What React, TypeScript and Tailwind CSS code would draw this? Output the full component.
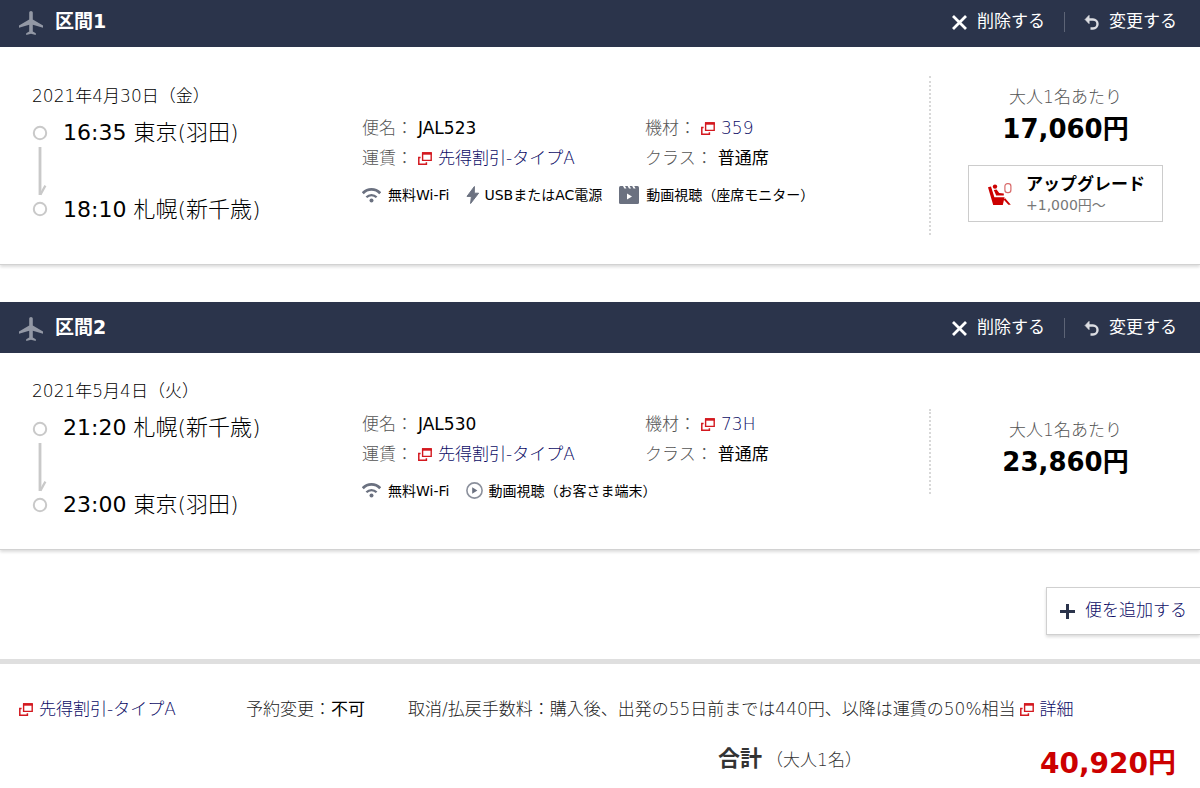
import type { ReactNode } from 'react'

interface Feature {
  icon: 'wifi' | 'power' | 'monitor' | 'play'
  label: string
}

interface Stop {
  time: string
  place: string
}

interface Segment {
  title: string
  date: string
  stops: Stop[]
  flight: string
  fare: string
  aircraft: string
  seatClass: string
  features: Feature[]
  price: string
  upgrade?: string
}

const SEGMENTS: Segment[] = [
  {
    title: '区間1',
    date: '2021年4月30日（金）',
    stops: [
      { time: '16:35', place: '東京(羽田)' },
      { time: '18:10', place: '札幌(新千歳)' },
    ],
    flight: 'JAL523',
    fare: '先得割引-タイプA',
    aircraft: '359',
    seatClass: '普通席',
    features: [
      { icon: 'wifi', label: '無料Wi-Fi' },
      { icon: 'power', label: 'USBまたはAC電源' },
      { icon: 'monitor', label: '動画視聴（座席モニター）' },
    ],
    price: '17,060円',
    upgrade: '+1,000円～',
  },
  {
    title: '区間2',
    date: '2021年5月4日（火）',
    stops: [
      { time: '21:20', place: '札幌(新千歳)' },
      { time: '23:00', place: '東京(羽田)' },
    ],
    flight: 'JAL530',
    fare: '先得割引-タイプA',
    aircraft: '73H',
    seatClass: '普通席',
    features: [
      { icon: 'wifi', label: '無料Wi-Fi' },
      { icon: 'play', label: '動画視聴（お客さま端末）' },
    ],
    price: '23,860円',
  },
]

function PlaneIcon() {
  return (
    <svg className="mt-0.5 h-6 w-6 shrink-0" viewBox="2 2 20 20" fill="#9398a5" aria-hidden="true">
      <path d="M22 16v-2l-8.5-5V3.5c0-.83-.67-1.5-1.5-1.5s-1.5.67-1.5 1.5V9L2 14v2l8.5-2.5V19L8 20.5V22l4-1 4 1v-1.5L13.5 19v-5.5L22 16z" />
    </svg>
  )
}

function CloseIcon() {
  return (
    <svg className="mt-0.5 h-[15px] w-[15px]" viewBox="0 0 15 15" stroke="#fff" strokeWidth="2.8" aria-hidden="true">
      <path d="M1 1l13 13M14 1L1 14" />
    </svg>
  )
}

function UndoIcon() {
  return (
    <svg className="mt-0.5 h-[15px] w-[15px]" viewBox="0 0 15 15" fill="none" aria-hidden="true">
      <path d="M3 4.5h6a4.5 4.5 0 0 1 0 9H6.5" stroke="#dcdde2" strokeWidth="2.4" />
      <path d="M5 .5L1.2 4.5 5 8.5z" fill="#dcdde2" stroke="#dcdde2" />
    </svg>
  )
}

function WindowIcon() {
  return (
    <svg className="h-[13px] w-[14px] shrink-0" viewBox="0 0 14 13" fill="none" stroke="#d3181f" aria-hidden="true">
      <path d="M4.6 1.2h8.6v7.2H4.6z" strokeWidth="1.4" />
      <path d="M4 1.4h9.8" strokeWidth="2.6" />
      <path d="M2.6 5.6H.8v6.6h7.6v-2" strokeWidth="1.5" />
    </svg>
  )
}

function FeatureIcon({ icon }: { icon: Feature['icon'] }) {
  if (icon === 'wifi') {
    return (
      <svg className="mr-[7px] h-[15px] w-[19px]" viewBox="0 0 19 15" fill="none" stroke="#6b7180" aria-hidden="true">
        <path d="M.8 5.2C5.6.2 13.4.2 18.2 5.2" strokeWidth="2.7" />
        <path d="M4.4 9.2c2.9-2.9 7.3-2.9 10.2 0" strokeWidth="2.3" />
        <circle cx="9.5" cy="12.4" r="2" fill="#6b7180" stroke="none" />
      </svg>
    )
  }
  if (icon === 'power') {
    return (
      <svg className="mr-1 h-[18px] w-[14px]" viewBox="0 0 14 18" fill="#6b7180" aria-hidden="true">
        <path d="M8.4.5L1 10.4h4.4L4.6 17.5 12.6 7.2H8.3z" stroke="#6b7180" />
      </svg>
    )
  }
  if (icon === 'monitor') {
    return (
      <svg className="mr-[7px] h-[18px] w-5" viewBox="0 0 20 18" aria-hidden="true">
        <rect width="20" height="18" rx="1.5" fill="#6b7180" />
        <path d="M4 0h2l1.4 2.4h-2zM8.6 0h2L12 2.4h-2zM13.2 0h2l1.4 2.4h-2z" fill="#fff" />
        <path d="M8 7.5v6l5-3z" fill="#fff" />
      </svg>
    )
  }
  return (
    <svg className="mr-[5px] h-[17px] w-[17px]" viewBox="0 0 17 17" aria-hidden="true">
      <circle cx="8.5" cy="8.5" r="7.6" fill="#fff" stroke="#8b909c" strokeWidth="1.6" />
      <path d="M6.2 5.2v6.6l5.2-3.3z" fill="#6b7180" />
    </svg>
  )
}

function RouteLine() {
  return (
    <svg className="mr-[15px] h-[92px] w-4 shrink-0" viewBox="0 0 16 92" fill="none" stroke="#c9c9c9" aria-hidden="true">
      <circle cx="8" cy="8" r="6.2" strokeWidth="2" />
      <path d="M8 22v48" strokeWidth="2.8" />
      <path d="M8.4 69.6l5-9" strokeWidth="2.2" />
      <circle cx="8" cy="84" r="6.2" strokeWidth="2" />
    </svg>
  )
}

function SeatIcon() {
  return (
    <svg className="h-6 w-6 shrink-0" viewBox="0 0 24 24" fill="#c00" aria-hidden="true">
      <path d="M0 5.2l3-.8 3.4 10.8h10.2L14.8 23H5.2z" />
      <circle cx="7" cy="4.6" r="2.2" />
      <path d="M5.8 8l2.8-.6 2.6 3.6 4.6.4v2.2H8.2z" />
      <path d="M15.6 17.6l1.6-1.4 5.6 6.6h-2.4z" />
      <rect x="16.9" y="1.6" width="6" height="9" rx="2.6" fill="none" stroke="#d86a6a" strokeWidth="1.2" />
    </svg>
  )
}

function PopupLink({ children }: { children: ReactNode }) {
  return (
    <a href="#" className="inline-flex items-center gap-[6px] whitespace-nowrap text-[#0c0c66]">
      <WindowIcon />
      {children}
    </a>
  )
}

function Detail({ label, children }: { label: string; children: ReactNode }) {
  return (
    <div className="flex gap-[5px] whitespace-nowrap">
      <dt className="text-[#555]">{label}：</dt>
      <dd>{children}</dd>
    </div>
  )
}

function SegmentCard({ segment, first }: { segment: Segment; first: boolean }) {
  return (
    <section className="border-b border-[#d2d2d2] shadow-[0_2px_3px_rgba(0,0,0,0.14)]">
      <header className={`flex items-center bg-[#2b344b] pr-[23px] pl-[19px] font-normal text-white ${first ? 'h-[47px] pb-1' : 'h-[51px]'}`}>
        <PlaneIcon />
        <h2 className="ml-3 flex-1 text-[19px] font-bold">{segment.title}</h2>
        <button type="button" className="flex items-center gap-[10px]">
          <CloseIcon />
          削除する
        </button>
        <span className="mx-[19px] h-5 w-px bg-[#5d6476]" />
        <button type="button" className="flex items-center gap-[10px]">
          <UndoIcon />
          変更する
        </button>
      </header>

      <div className="flex items-center py-[29px] pl-8">
        <div className="w-[330px] shrink-0">
          <p className="mb-[13px] leading-[18px]">{segment.date}</p>
          <div className="flex items-center">
            <RouteLine />
            <div className="flex flex-col gap-[47px] text-[22px] leading-[30px] whitespace-nowrap">
              {segment.stops.map((stop) => (
                <p key={stop.time}>
                  <time className="font-normal">{stop.time}</time> {stop.place}
                </p>
              ))}
            </div>
          </div>
        </div>

        <div className="min-w-0 flex-1 pt-3">
          <dl className="grid grid-cols-[283px_1fr] leading-[29px]">
            <Detail label="便名"><span className="font-normal">{segment.flight}</span></Detail>
            <Detail label="機材"><PopupLink>{segment.aircraft}</PopupLink></Detail>
            <Detail label="運賃"><PopupLink>{segment.fare}</PopupLink></Detail>
            <Detail label="クラス"><span className="font-normal">{segment.seatClass}</span></Detail>
          </dl>
          <ul className="mt-[9px] flex gap-[17px] pb-0.5 text-[14px] leading-6 font-normal whitespace-nowrap">
            {segment.features.map((f) => (
              <li key={f.label} className="flex items-center">
                <FeatureIcon icon={f.icon} />
                {f.label}
              </li>
            ))}
          </ul>
        </div>

        <div className="flex w-[271px] shrink-0 flex-col items-center border-l-2 border-dotted border-[#d8d8d8] pt-2 pb-[13px]">
          <p className="leading-[26px] text-[#555]">大人1名あたり</p>
          <p className="text-[26px] leading-[38px] font-bold">{segment.price}</p>
          {segment.upgrade && (
            <button type="button" className="mt-[17px] flex h-[57px] w-[195px] items-center gap-[14px] border border-[#ccc] pl-[19px] text-left">
              <SeatIcon />
              <span className="flex flex-col">
                <span className="leading-[22px] font-bold">アップグレード</span>
                <span className="text-[14px] leading-5 font-normal text-[#777]">{segment.upgrade}</span>
              </span>
            </button>
          )}
        </div>
      </div>
    </section>
  )
}

export default function App() {
  return (
    <main className="overflow-x-hidden bg-white font-['DejaVu_Sans','Noto_Sans_CJK_JP',sans-serif] text-[17px] font-light text-black">
      <div className="flex flex-col gap-[37px]">
        {SEGMENTS.map((s, i) => (
          <SegmentCard key={s.title} segment={s} first={i === 0} />
        ))}
      </div>

      <div className="mt-[37px] flex justify-end">
        <button
          type="button"
          className="flex h-12 items-center gap-[10px] border border-r-0 border-[#d0d0d0] pr-[13px] pl-[13px] text-[#0c0c66] shadow-[0_2px_3px_rgba(0,0,0,0.14)]"
        >
          <svg className="h-[15px] w-[15px]" viewBox="0 0 15 15" stroke="#2b344b" strokeWidth="3" aria-hidden="true">
            <path d="M7.5 0v15M0 7.5h15" />
          </svg>
          便を追加する
        </button>
      </div>

      {/* fare rules and total */}
      <footer className="mt-6 border-t-[5px] border-[#dfdfdf] pt-[33px]">
        <div className="flex items-center pl-[19px] leading-6 whitespace-nowrap text-[#222]">
          <div className="w-[227px] shrink-0"><PopupLink>先得割引-タイプA</PopupLink></div>
          <p className="w-[162px] shrink-0">予約変更：<span className="font-normal text-black">不可</span></p>
          <p className="mr-1">取消/払戻手数料：購入後、出発の55日前までは440円、以降は運賃の50%相当</p>
          <PopupLink>詳細</PopupLink>
        </div>
        <div className="mt-5 flex items-center justify-end pr-6">
          <p className="mr-[178px] pb-3 text-[#333]">
            <strong className="mr-1 text-[22px] font-bold">合計</strong>
            （大人1名）
          </p>
          <p className="text-[28px] leading-10 font-bold text-[#c00]">40,920円</p>
        </div>
      </footer>
    </main>
  )
}
